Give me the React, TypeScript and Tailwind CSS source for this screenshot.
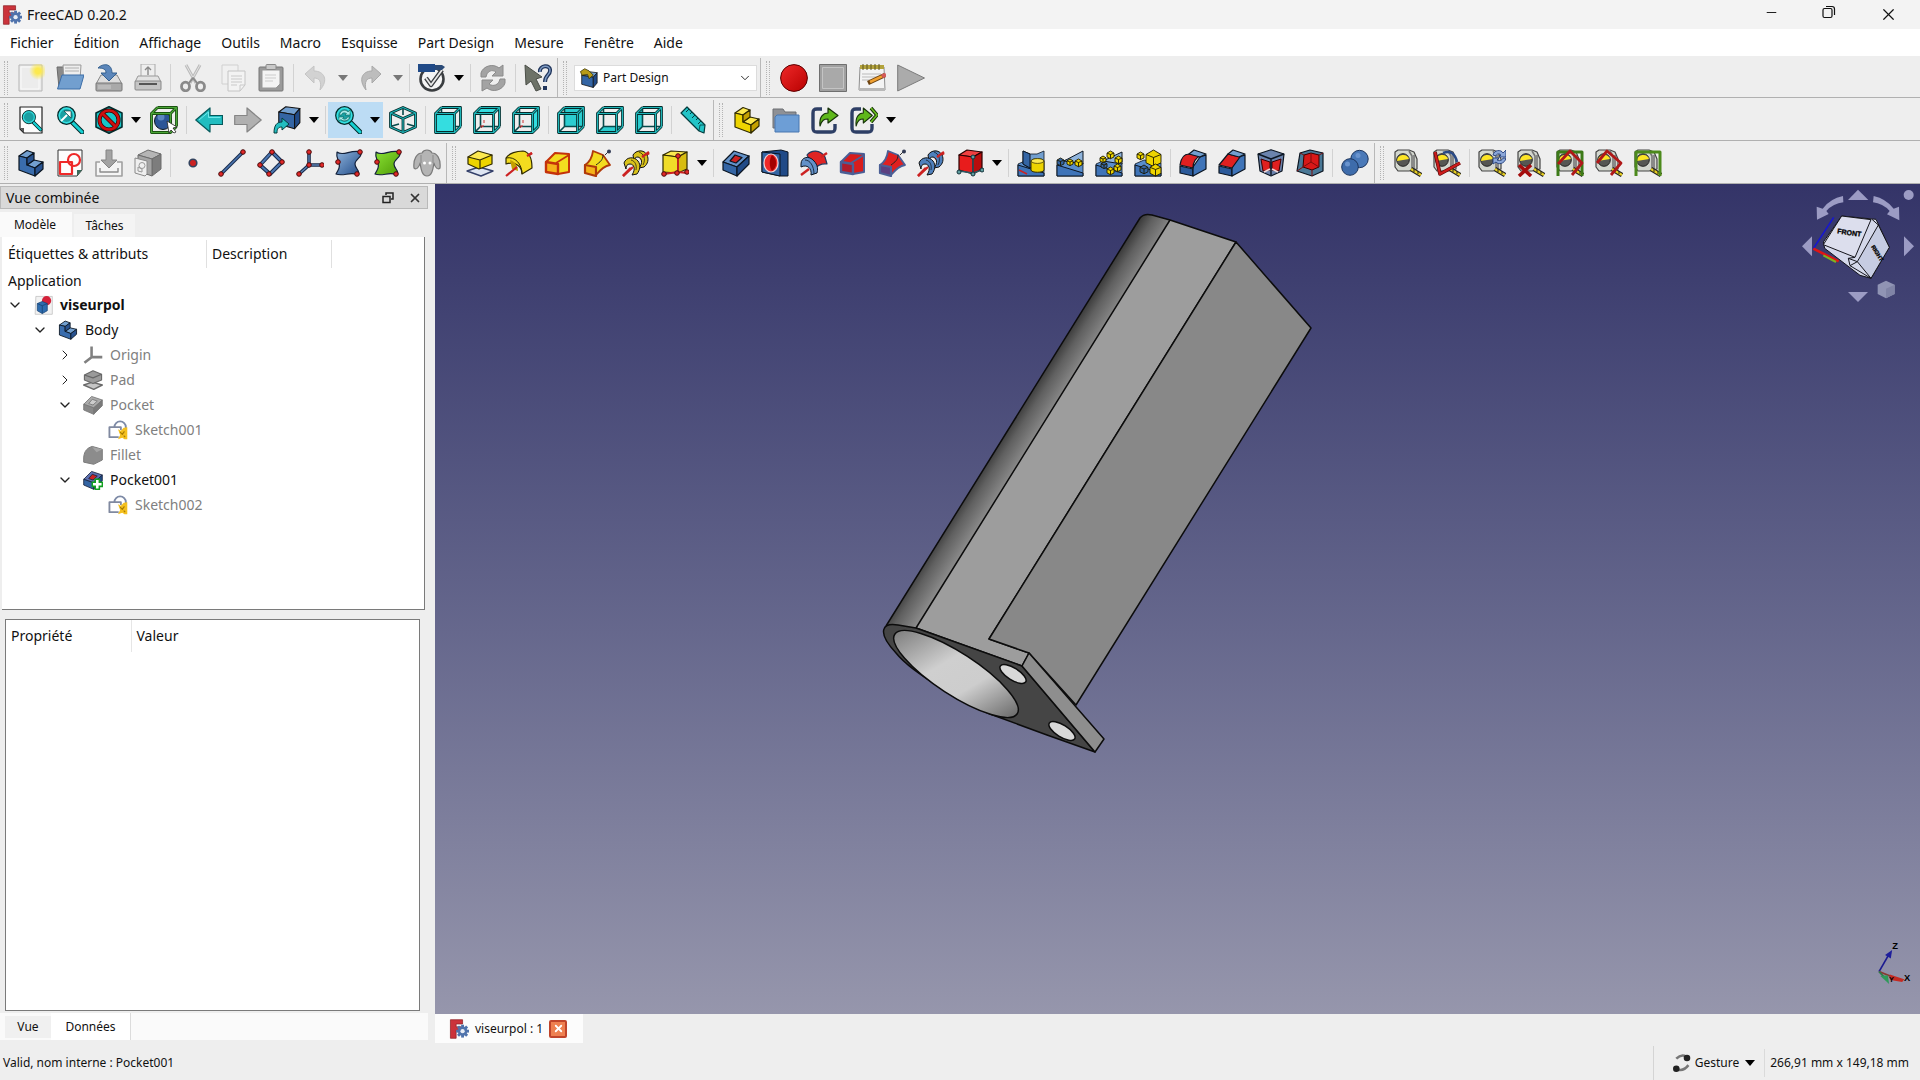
import React, { useState } from 'react';
import { Minus, X, ChevronDown, ChevronRight } from 'lucide-react';

type IconProps = { children: React.ReactNode; className?: string };

const Icon = ({ children, className = 'h-7 w-7' }: IconProps) => (
  <svg viewBox="0 0 28 28" className={`${className} shrink-0`} fill="none" strokeLinejoin="round" aria-hidden="true">
    {children}
  </svg>
);

/* ---------- shared shapes ---------- */

const FreeCadLogo = ({ className }: { className?: string }) => (
  <Icon className={className}>
    <path d="M2 1h17v6H10v4h7v5h-7v11H2z" fill="#cb333b" stroke="#8c1d22" strokeWidth="1" />
    <g transform="translate(19 17)">
      {[0, 45, 90, 135].map((a) => (
        <rect key={a} x="-2" y="-9" width="4" height="18" fill="#4f73ac" transform={`rotate(${a})`} />
      ))}
      <circle r="6.5" fill="#4f73ac" />
      <circle r="3" fill="#e8edf5" />
    </g>
  </Icon>
);

const Box = ({ top, front, side, line = '#111', x = 0, y = 0, s = 1 }: any) => (
  <g transform={`translate(${x} ${y}) scale(${s})`} stroke={line} strokeWidth="1.2">
    <path d="M2 8 10 2 26 4 20 11z" fill={top} />
    <path d="M2 8 20 11V27L2 22z" fill={front} />
    <path d="M20 11 26 4V20L20 27z" fill={side} />
  </g>
);

const Magnifier = ({ x = 0, y = 0, s = 1 }: { x?: number; y?: number; s?: number }) => (
  <g transform={`translate(${x} ${y}) scale(${s})`}>
    <path d="M16 16 26 26" stroke="#042a2a" strokeWidth="5" strokeLinecap="round" />
    <path d="M16 16 26 26" stroke="#16d0d2" strokeWidth="3" strokeLinecap="round" />
    <circle cx="10.5" cy="9.5" r="8.8" fill="#1b9fa2" stroke="#042a2a" strokeWidth="1.2" />
    <circle cx="10.5" cy="9.5" r="7.2" stroke="#34e0e2" strokeWidth="1.4" />
  </g>
);

const cubeEdges = 'M1.5 7.5H20.5V26.5H1.5ZM7.5 1.5H26.5V20.5M1.5 7.5 7.5 1.5M20.5 7.5 26.5 1.5M20.5 26.5 26.5 20.5';
const cubeHidden = 'M7.5 1.5V20.5H26.5M1.5 26.5 7.5 20.5';

const ViewCube = ({ face, back }: { face: string; back?: boolean }) => (
  <Icon>
    {back && <path d={face} fill="#2ccdd0" />}
    <path d={cubeHidden} stroke="#064a4b" strokeWidth="1.600" />
    {!back && <path d="M7 20 11 20M11 14V17M8 22 10 20" stroke="#cc3030" strokeWidth="1" />}
    {!back && <path d={face} fill="#34dde0" />}
    <path d={cubeEdges} stroke="#042a2a" strokeWidth="2.800" />
    <path d={cubeEdges} stroke="#1fb5b8" strokeWidth="1.200" />
  </Icon>
);

const Tape = ({ children }: { children?: React.ReactNode }) => (
  <Icon>
    <path d="M1 3 4 1H15L20 3 23 10V20L15 22H4L1 18z" fill="#d3d7cf" stroke="#444" strokeWidth="1.2" />
    <path d="M15 2 18 7V21M20 6V20" stroke="#777" strokeWidth="1.6" />
    <circle cx="9" cy="11" r="6.3" fill="#555753" stroke="#222" strokeWidth="1" />
    <path d="M3 12A6.2 6.2 0 0 1 15 10z" fill="#fce525" />
    <path d="M17 20 27 26" stroke="#222" strokeWidth="4.5" />
    <path d="M17 20 27 26" stroke="#e8cf20" strokeWidth="2.4" />
    <path d="M20 20v3M24 22v3" stroke="#222" strokeWidth="1" />
    {children}
  </Icon>
);

const Helix = ({ fill, rod }: { fill: string; rod: string }) => (
  <Icon>
    <path d="M1 27 9 19M18 10 27 4" stroke={rod} strokeWidth="2.6" />
    <path d="M11 6C14 1 22 0 25 6C27 10 26 15 22 18L17 19C21 14 20 9 16 8C14 8 12 9 12 12z" fill={fill} stroke="#111" />
    <path d="M2 14C4 8 12 7 16 12C19 16 18 21 15 25L10 26C14 20 12 15 8 15C5 15 4 17 4 20z" fill={fill} stroke="#111" />
    <path d="M9 11C13 12 15 16 14 21M17 3C22 5 24 10 21 16" stroke="#111" strokeWidth=".7" />
    <path d="M1 27 11 18M20 8 27 3" stroke={rod} strokeWidth="2.2" />
  </Icon>
);

const Loft = ({ fill, edge, face }: { fill: string; edge: string; face: string }) => (
  <Icon>
    <path d="M2 13 11 4 25 5V23L14 25z" fill={fill} stroke={edge} strokeWidth="2" />
    <path d="M12 14 25 6" stroke={edge} strokeWidth="1.6" />
    <path d="M2 13 14 15V25L2 23z" fill={face} stroke={edge} strokeWidth="2.4" />
  </Icon>
);

const Pipe = ({ fill, edge, face }: { fill: string; edge: string; face: string }) => (
  <Icon>
    <path d="M2 16C7 13 9 9 10 2L20 6 27 16C22 17 18 20 14 25z" fill={fill} stroke={edge} strokeWidth="1.8" />
    <path d="M13 16C17 13 20 11 20 6" stroke="#222" strokeWidth="1" />
    <path d="M2 16 13 18V27L2 24z" fill={face} stroke={edge} strokeWidth="2.2" />
    <path d="M22 6 25 3" stroke="#333" strokeWidth="1" />
    <circle cx="26" cy="2.5" r="2" fill="#333c55" />
  </Icon>
);

const Sheet = ({ children }: { children: React.ReactNode }) => (
  <Icon>
    <path d="M1 15 10 11 27 14V27H1z" fill="#5a8ecb" stroke="#0b1521" strokeWidth=".8" />
    <path d="M1 16 27 24V27H1z" fill="#3f74b8" stroke="#0b1521" strokeWidth="1" />
    {children}
  </Icon>
);

const TinyCube = ({ x, y, c = '#edd400', s = 6 }: { x: number; y: number; c?: string; s?: number }) => (
  <g stroke="#1c1800" strokeWidth=".9">
    <path d={`M${x} ${y + s * 0.3}L${x + s * 0.5} ${y}L${x + s} ${y + s * 0.3}V${y + s * 0.85}L${x + s * 0.5} ${y + s * 1.1}L${x} ${y + s * 0.85}Z`} fill={c} />
    <path d={`M${x} ${y + s * 0.3}L${x + s * 0.5} ${y + s * 0.5}L${x + s} ${y + s * 0.3}M${x + s * 0.5} ${y + s * 0.5}V${y + s * 1.1}`} />
  </g>
);

const BodyShape = ({ a, b, c, line }: { a: string; b: string; c: string; line: string }) => (
  <g stroke={line} strokeWidth="1.2">
    <path d="M2 7 10 1.500 17 4 10 9zM10 16 17 11 26 13 18 19z" fill={a} />
    <path d="M2 7 10 9V16L18 19V27L2 21z" fill={b} />
    <path d="M10 9 17 4V11L10 16zM18 19 26 13V20L18 27z" fill={c} />
  </g>
);

/* ---------- icons, first row ---------- */

const NewIcon = () => (
  <Icon>
    <defs>
      <radialGradient id="glow"><stop offset=".3" stopColor="#fce94f" /><stop offset="1" stopColor="#fce94f" stopOpacity="0" /></radialGradient>
    </defs>
    <rect x="2" y="1" width="23" height="26" fill="#ececec" stroke="#b5b5b5" />
    <path d="M4 3H22V25H4z" stroke="#fafafa" />
    <circle cx="21" cy="7" r="9" fill="url(#glow)" />
  </Icon>
);
const OpenIcon = () => (
  <Icon>
    <path d="M1 3H9L11 5V24H3z" fill="#8a8a8a" stroke="#6a6a6a" />
    <path d="M7 1H25L24 16H8z" fill="#eee" stroke="#999" />
    <path d="M9 4H23M9 7H23" stroke="#b0b0b0" />
    <path d="M6 11H28L24 25H1.5z" fill="#729fcf" stroke="#3d6ea8" />
  </Icon>
);
const SaveIcon = () => (
  <Icon>
    <path d="M6 11H22L27 20H1z" fill="#ddd" stroke="#888" />
    <rect x="1" y="19" width="26" height="8" rx="1" fill="#a9a9a9" stroke="#777" />
    <path d="M3 22H16M3 24H16" stroke="#ccc" />
    <path d="M3 4C8-1 17-1 17 9H22L14 17 6 9H11C11 5 8 4 3 4z" fill="#5b86ba" stroke="#34608f" />
  </Icon>
);
const PrintIcon = () => (
  <Icon>
    <rect x="7" y="0" width="14" height="15" fill="#eee" stroke="#aaa" />
    <path d="M14 3V11M11 6 14 3 17 6" stroke="#888" strokeWidth="1.4" />
    <path d="M4 12H24L27 18H1z" fill="#e3e3e3" stroke="#999" />
    <rect x="1" y="17" width="26" height="9" rx="1" fill="#c4c4c4" stroke="#888" />
    <path d="M5 20H23" stroke="#555" strokeWidth="2" />
  </Icon>
);
const CutIcon = () => (
  <Icon>
    <path d="M7 1 17 19M21 1 11 19" stroke="#bbb" strokeWidth="3" />
    <path d="M7 1 17 19M21 1 11 19" stroke="#e2e2e2" strokeWidth="1" />
    <ellipse cx="6.5" cy="22.5" rx="4" ry="4.3" stroke="#8a8a8a" strokeWidth="2.8" />
    <ellipse cx="21.5" cy="22.5" rx="4" ry="4.3" stroke="#8a8a8a" strokeWidth="2.8" />
    <path d="M10 19 14 14 18 19" stroke="#8a8a8a" strokeWidth="2" />
  </Icon>
);
const CopyIcon = () => (
  <Icon>
    <rect x="4" y="1" width="16" height="19" fill="#f0f0f0" stroke="#d0d0d0" />
    <path d="M10 7H27V21L22 27H10z" fill="#f3f3f3" stroke="#c4c4c4" />
    <path d="M13 12H24M13 15H24M13 18H24M13 21H19M27 21H22V27" stroke="#c9c9c9" />
  </Icon>
);
const PasteIcon = () => (
  <Icon>
    <rect x="2" y="3" width="24" height="24" rx="1" fill="#9a9a9a" stroke="#777" />
    <path d="M5 6H23V20L19 24H5z" fill="#f4f4f4" stroke="#999" />
    <rect x="9" y="0.5" width="10" height="5" rx="1" fill="#c8c8c8" stroke="#888" />
    <path d="M8 11H19M8 14H19M8 17H16" stroke="#ccc" />
  </Icon>
);
const UndoIcon = () => (
  <Icon>
    <path d="M3 10 12 2V7C22 7 27 16 18 26C20 17 17 14 12 14V19z" fill="#d2d2d2" stroke="#c4c4c4" />
  </Icon>
);
const RedoIcon = () => (
  <Icon>
    <path d="M24 10 15 2V7C5 7 1 16 9 26C7 17 10 14 15 14V19z" fill="#bdbdbd" stroke="#a9a9a9" />
  </Icon>
);
const CheckIcon = () => (
  <Icon>
    <circle cx="14" cy="15" r="11.5" fill="#f5f5f5" stroke="#3a3d40" strokeWidth="2.6" />
    <path d="M8 14 13 21 24 6" stroke="#3a3d40" strokeWidth="4.4" />
    <path d="M8 14 13 21 24 6" stroke="#e8e8e8" strokeWidth="1.8" />
    <rect x="0" y="0" width="17" height="8" fill="#204a87" />
    <path d="M17 1H24L27 3 24 6H17z" fill="#2b4b78" />
  </Icon>
);
const RefreshIcon = () => (
  <Icon>
    <path d="M2 13V9C4 2 14-1 20 4L24 1V12H13L17 8C13 5 8 7 7 13z" fill="#a3a3a3" stroke="#8a8a8a" />
    <path d="M26 15V19C24 26 14 29 8 24L3 27V16H14L10 20C14 23 20 21 21 15z" fill="#a3a3a3" stroke="#8a8a8a" />
  </Icon>
);
const HelpIcon = () => (
  <Icon>
    <path d="M1 1 2 21 7 17 12 27 17 25 12 15 18 13z" fill="#6d7268" stroke="#4a4e47" />
    <path d="M16 8C15 1 27 0 26 7C26 11 21 11 21 18" stroke="#20355c" strokeWidth="4" />
    <path d="M16 8C15 1 27 0 26 7C26 11 21 11 21 18" stroke="#7f9cc4" strokeWidth="1.4" />
    <rect x="19" y="22" width="4" height="4" fill="#20355c" />
  </Icon>
);
const RecordIcon = () => (
  <Icon>
    <defs><linearGradient id="rec" x1="0" y1="0" x2="1" y2="1"><stop stopColor="#ef2929" /><stop offset="1" stopColor="#b80000" /></linearGradient></defs>
    <circle cx="14" cy="14" r="13.4" fill="url(#rec)" stroke="#5c0000" />
  </Icon>
);
const StopIcon = () => (
  <Icon>
    <rect x=".5" y=".5" width="27" height="27" fill="#a0a0a0" stroke="#6f6f6f" />
    <rect x="3.5" y="3.5" width="21" height="21" fill="#a9a9a9" stroke="#c4c4c4" />
  </Icon>
);
const MacroIcon = () => (
  <Icon>
    <path d="M2 3H26L27 26H1z" fill="#f4f4f4" stroke="#8e8e8e" />
    <path d="M2 1H26V5H2z" fill="#b3a33c" />
    <path d="M5 0V6M9 0V6M13 0V6M17 0V6M21 0V6" stroke="#5c5420" />
    <path d="M4 10H23M4 13H23M4 16H12" stroke="#bbb" />
    <path d="M1 24H27V27H1z" fill="#b9b9b9" />
    <path d="M10 19 27 11" stroke="#6d4310" strokeWidth="4.4" />
    <path d="M12 18 24 12.400" stroke="#f0a030" strokeWidth="2.6" />
    <path d="M24 12.400 28 10.500" stroke="#d35a5a" strokeWidth="4" />
  </Icon>
);
const PlayIcon = () => (
  <Icon>
    <path d="M.7 1 27.500 14 .7 27z" fill="#ababab" stroke="#7c7c7c" />
  </Icon>
);

/* ---------- icons, second row ---------- */

const FitAllIcon = () => (
  <Icon>
    <path d="M3 1H25V27H7L3 23z" fill="#fcfcfc" stroke="#222" strokeWidth="1.2" />
    <path d="M3 22H7V27z" fill="#555" />
    <Magnifier x={4} y={4} s={0.75} />
  </Icon>
);
const FitSelectionIcon = () => (
  <Icon>
    <Magnifier />
    <path d="M5 15 11 9" stroke="#fff" strokeWidth="2" />
    <path d="M8 5H15V12z" fill="#fff" stroke="#042a2a" strokeWidth=".6" />
  </Icon>
);
const DrawStyleIcon = () => (
  <Icon>
    <path d="M14 .8 27 7V21L14 27.200 1 21V7z" fill="#16c5c8" stroke="#032d2e" strokeWidth="1.6" />
    <circle cx="14" cy="14" r="9.500" stroke="#320000" strokeWidth="4" />
    <path d="M7 7 21 21" stroke="#320000" strokeWidth="4.200" />
    <circle cx="14" cy="14" r="9.500" stroke="#cc1010" strokeWidth="2.600" />
    <path d="M7 7 21 21" stroke="#cc1010" strokeWidth="2.800" />
  </Icon>
);
const BoundBoxIcon = () => (
  <Icon>
    <circle cx="13" cy="15" r="8.500" fill="#2c5597" stroke="#0b1521" />
    <circle cx="11" cy="11" r="3.500" fill="#5c86c0" />
    <path d={cubeEdges} stroke="#0c3a06" strokeWidth="2.800" />
    <path d={cubeEdges} stroke="#4aa536" strokeWidth="1.400" />
    <path d="M17 15 27 21 23 22 26 26 24 27 21 24 19 27z" fill="#fff" stroke="#222" strokeWidth=".8" />
  </Icon>
);
const BackIcon = () => (
  <Icon>
    <path d="M.8 14 15 2V9.500H27.500V18.500H15V26z" fill="#22bdc0" stroke="#05595b" strokeWidth="1.200" />
    <path d="M4 14 13.500 6V11.500H25.500" stroke="#6fe8ea" />
  </Icon>
);
const ForwardIcon = () => (
  <Icon>
    <path d="M27.200 14 13 2V9.500H.7V18.500H13V26z" fill="#b0b0b0" stroke="#858585" strokeWidth="1.200" />
  </Icon>
);
const LinkNavIcon = () => (
  <Icon>
    <Box top="#729fcf" front="#3465a4" side="#204a87" x={4} y={-1} s={0.88} />
    <path d="M1 27C1 19 4 16 9 16V12L16 18 9 24V21C5 21 4 23 4 27z" fill="#22bdc0" stroke="#043c3d" />
  </Icon>
);
const SyncViewIcon = () => (
  <Icon>
    <Magnifier />
    <path d="M5.500 9C6 4 12 3 14 6L16 4V9H11L12.500 7.500C10 6 8 7 7.500 9zM15.500 11C15 15 9 16 7 13.500L5 15V11H10L8.500 12.500C11 14 13 13 13.500 11z" fill="#a9eaeb" stroke="#054" strokeWidth=".5" />
  </Icon>
);
const IsoIcon = () => (
  <Icon>
    <path d="M14 2V9M3 20 10 18M25 20 18 18" stroke="#064a4b" strokeWidth="1.600" />
    <path d="M14 1.500 26.500 7V21L14 26.500 1.500 21V7zM1.500 7 14 12.500 26.500 7M14 12.500V26.500" stroke="#042a2a" strokeWidth="2.800" />
    <path d="M14 1.500 26.500 7V21L14 26.500 1.500 21V7zM1.500 7 14 12.500 26.500 7M14 12.500V26.500" stroke="#1fb5b8" strokeWidth="1.200" />
  </Icon>
);
const RulerIcon = () => (
  <Icon>
    <path d="M1 7 7 1 25 19 24 27 19 25z" fill="#22c4c7" stroke="#043c3d" strokeWidth="1.200" />
    <path d="M19 25 20 19 25 19" stroke="#043c3d" strokeWidth=".8" />
    <path d="M9 3 6 6M12 6 10 8M15 9 12 12M18 12 16 14M21 15 18 18" stroke="#043c3d" />
  </Icon>
);
const PartIcon = () => (
  <Icon>
    <BodyShape a="#fce94f" b="#edd400" c="#c4a000" line="#302b00" />
  </Icon>
);
const GroupIcon = () => (
  <Icon>
    <path d="M1 3H11L13 6H24V22H1z" fill="#8e9095" stroke="#6c6e72" />
    <path d="M5 9H27V26H3V11z" fill="#6d9ed6" stroke="#4877b0" />
  </Icon>
);
const GreenArrow = () => (
  <path d="M9 20C8 11 12 7 17 7V2L27 9.500 17 17V13C13 13 11 14 9 20z" fill="#5fb81b" stroke="#17330a" strokeWidth="1.200" />
);
const LinkIcon = () => (
  <Icon>
    <path d="M11 3H6C3 3 2 4 2 7V22C2 25 3 26 6 26H20C23 26 24 25 24 22V18" stroke="#2e3f66" strokeWidth="3.400" />
    <GreenArrow />
  </Icon>
);
const LinkGroupIcon = () => (
  <Icon>
    <path d="M11 3H6C3 3 2 4 2 7V22C2 25 3 26 6 26H18C21 26 22 25 22 22V18" stroke="#2e3f66" strokeWidth="3.400" />
    <g transform="translate(-2 0) scale(.9 1)"><GreenArrow /></g>
    <path d="M21 2 27 9 21 16" stroke="#17330a" strokeWidth="3.600" />
    <path d="M21 2 27 9 21 16" stroke="#6cc11f" strokeWidth="1.600" />
  </Icon>
);

/* ---------- icons, third row ---------- */

const BodyIcon = ({ className }: { className?: string }) => (
  <Icon className={className}>
    <BodyShape a="#729fcf" b="#3a6dad" c="#28528f" line="#0b1521" />
  </Icon>
);
const SketchIcon = () => (
  <Icon>
    <path d="M2 1H26V21L21 27H2z" fill="#fdfdfd" stroke="#333" />
    <path d="M26 21H21V27z" fill="#3a6b5b" />
    <rect x="4" y="13" width="12" height="12" stroke="#ef2929" strokeWidth="2.200" />
    <circle cx="18" cy="11" r="6" stroke="#ef2929" strokeWidth="2.200" />
  </Icon>
);
const ImportIcon = () => (
  <Icon>
    <path d="M5 13H1V27H27V13H22" fill="#f5f5f5" stroke="#a0a0a0" strokeWidth="1.600" />
    <path d="M5 19V23H23V19" stroke="#8c8c8c" strokeWidth="1.400" />
    <path d="M11 1H17V11H22L14 19 6 11H11z" fill="#a3a3a3" stroke="#848484" />
  </Icon>
);
const GrayCubeIcon = () => (
  <Icon>
    <path d="M4 6 14 1 27 5 18 10z" fill="#b5b5b5" stroke="#6c6c6c" />
    <path d="M18 10 27 5V20L18 27z" fill="#7d7d7d" stroke="#6c6c6c" />
    <path d="M4 6 18 10V27L4 22z" fill="#a5a5a5" stroke="#6c6c6c" />
    <path d="M1 9 13 12V25L11 27 1 24z" fill="#efefef" stroke="#8a8a8a" />
    <path d="M4 18 8 20V23L4 22z" stroke="#999" />
    <circle cx="8" cy="16.500" r="3" stroke="#999" />
  </Icon>
);
const PointIcon = () => (
  <Icon>
    <circle cx="14" cy="14" r="3.800" fill="#cc2222" stroke="#33435e" strokeWidth="1.600" />
  </Icon>
);
const Dot = ({ x, y }: { x: number; y: number }) => (
  <circle cx={x} cy={y} r="2.300" fill="#e22828" stroke="#4a0b0b" strokeWidth="1" />
);
const LineIcon = () => (
  <Icon>
    <path d="M3 25 25 3" stroke="#16294a" strokeWidth="3.600" />
    <path d="M3 25 25 3" stroke="#4a75b0" strokeWidth="1.600" />
    <Dot x={3} y={25} /><Dot x={25} y={3} />
  </Icon>
);
const PlaneIcon = () => (
  <Icon>
    <path d="M15 3 25 13 13 25 3 16z" stroke="#16294a" strokeWidth="4" />
    <path d="M15 3 25 13 13 25 3 16z" stroke="#4a75b0" strokeWidth="2" />
    <Dot x={15} y={3} /><Dot x={25} y={13} /><Dot x={12} y={25} /><Dot x={3} y={16} />
  </Icon>
);
const LcsIcon = () => (
  <Icon>
    <path d="M13 3V16L3 25M13 16H25" stroke="#16294a" strokeWidth="3.600" />
    <path d="M13 3V16L3 25M13 16H25" stroke="#5a7fb0" strokeWidth="1.400" />
    <Dot x={13} y={3} /><Dot x={13} y={16} /><Dot x={3} y={25} /><Dot x={26} y={16} />
  </Icon>
);
const BinderIcon = ({ from, to, id }: { from: string; to: string; id: string }) => (
  <Icon>
    <defs><linearGradient id={id} x1="0" y1="0" x2="1" y2="1"><stop stopColor={from} /><stop offset="1" stopColor={to} /></linearGradient></defs>
    <path d="M2 3C8 8 16 0 26 3C28 8 20 10 20 15C20 20 26 22 23 26C16 22 8 28 1 25C4 20 5 18 4 14C3 10 1 8 2 3z" fill={`url(#${id})`} stroke="#12203a" strokeWidth="1.200" />
    <Dot x={25} y={3} /><Dot x={3} y={13} /><Dot x={22} y={25} />
  </Icon>
);
const CloneIcon = () => (
  <Icon>
    <path d="M9 4C11 0 17 0 19 4C24 4 28 10 27 19C25 21 22 19 21 14C20 20 19 27 14 27C9 27 8 20 7 14C6 19 3 21 1 19C0 10 4 4 9 4z" fill="#b4b4b4" stroke="#7a7a7a" strokeWidth="1.200" />
    <path d="M8 6V14M20 6V14" stroke="#8a8a8a" />
    <circle cx="11.500" cy="14" r="1.500" fill="#fff" /><circle cx="17" cy="14" r="1.500" fill="#fff" />
  </Icon>
);
const PadIcon = () => (
  <Icon>
    <path d="M1 22 13 18 27 22 15 27z" fill="#dfe6f2" stroke="#34406a" strokeWidth="1.400" />
    <path d="M2 8V15L13 20 26 15V6z" fill="#edd400" stroke="#302b00" strokeWidth="1.200" />
    <path d="M2 8 12 2 26 6 14 11zM14 11V20" fill="#fce94f" stroke="#302b00" strokeWidth="1.200" />
  </Icon>
);
const RevolutionIcon = () => (
  <Icon>
    <path d="M19 9 27 4" stroke="#cc2222" strokeWidth="2.400" />
    <path d="M1 9C4 4 12 2 18 2C24 3 27 9 27 19L17 25C17 18 11 12 1 15z" fill="#f3dc1f" stroke="#302b00" strokeWidth="1.200" />
    <path d="M1 9C10 7 17 15 17 25" stroke="#302b00" />
    <path d="M5 11C9 12 13 16 13 22L7 20z" fill="#c4a000" />
    <path d="M1 27 12 18M22 7 27 4" stroke="#cc2222" strokeWidth="2.200" />
  </Icon>
);
const PrimAddIcon = () => (
  <Icon>
    <path d="M2 6 10 2 26 3 17 8z" fill="#fce94f" stroke="#302b00" strokeWidth="1.200" />
    <path d="M2 6 17 8V24L2 23z" fill="#f0dc28" stroke="#302b00" strokeWidth="1.200" />
    <path d="M17 8 26 3V20L17 24z" fill="#d8bc10" stroke="#302b00" strokeWidth="1.200" />
    <path d="M17 7V23L3 25M17 23 26 24" stroke="#cc2222" strokeWidth="1.800" />
    <Dot x={17} y={7} /><Dot x={3} y={25} /><Dot x={16} y={24} /><Dot x={26} y={23} />
  </Icon>
);
const PocketShape = ({ top, front, side, hole, line }: any) => (
  <g stroke={line} strokeWidth="1.200">
    <path d="M1 13 12 2 27 7 15 18z" fill={top} />
    <path d="M1 13 15 18V27L1 21z" fill={front} />
    <path d="M15 18 27 7V15L15 27z" fill={side} />
    <path d="M8 12 13 6 20 8.500 14 14z" fill={hole} />
  </g>
);
const PocketIcon = () => (
  <Icon><PocketShape top="#6391c8" front="#3465a4" side="#204a87" hole="#cc2222" line="#0b1521" /></Icon>
);
const HoleIcon = () => (
  <Icon>
    <path d="M1 3 20 1 27 3V27H19L1 23z" fill="#204a87" stroke="#0b1521" />
    <path d="M1 3 19 5V27L1 23z" fill="#3465a4" stroke="#0b1521" />
    <ellipse cx="10" cy="14" rx="7" ry="9" fill="#ef2929" stroke="#f3d0d0" strokeWidth="1.200" />
    <path d="M11 6C17 10 16 19 11 22C8 18 8 10 11 6z" fill="#a40000" />
  </Icon>
);
const GrooveIcon = () => (
  <Icon>
    <path d="M7 6C11 1 20 0 25 8L27 15C21 14 17 17 14 20z" fill="#df2424" stroke="#24385e" strokeWidth="1.200" />
    <path d="M1 15C1 8 9 6 14 12C18 16 18 21 17 24L11 26C12 19 7 15 1 18z" fill="#6391c8" stroke="#0b1521" />
    <path d="M5 11C10 11 14 17 14 25" stroke="#0b1521" strokeWidth=".8" />
    <path d="M1 26 9 20M21 8 27 4" stroke="#cc2222" strokeWidth="2.400" />
  </Icon>
);
const PrimSubIcon = () => (
  <Icon>
    <path d="M3 6 11 1 26 3 17 8z" fill="#f04040" stroke="#2b0000" strokeWidth="1.200" />
    <path d="M3 6 17 8V25L3 21z" fill="#e81c1c" stroke="#2b0000" strokeWidth="1.200" />
    <path d="M17 8 26 3V20L17 25z" fill="#b80d0d" stroke="#2b0000" strokeWidth="1.200" />
    <path d="M17 7V24L3 22M17 24 26 21" stroke="#2c5b66" strokeWidth="1.400" />
    {[[17, 8], [3, 23], [17, 25], [26, 21]].map(([x, y]) => (
      <circle key={`${x}-${y}`} cx={x} cy={y} r="2" fill="#5f9ea0" stroke="#14323a" />
    ))}
  </Icon>
);
const MirroredIcon = () => (
  <Sheet>
    <path d="M6 2 13 5 20 5 27 2V14L12 19 6 15z" fill="#729fcf" stroke="#0b1521" strokeWidth=".8" />
    <path d="M6 2 13 5V19L6 15z" fill="#3465a4" stroke="#0b1521" />
    <path d="M14 12C14 9 27 9 27 12V21C27 24 14 24 14 21z" fill="#edd400" stroke="#302b00" />
    <ellipse cx="20.500" cy="12" rx="6.300" ry="2.400" fill="#fce94f" stroke="#302b00" strokeWidth=".7" />
    <path d="M2 21 10 25" stroke="#cc2222" strokeWidth="1.500" />
  </Sheet>
);
const LinearIcon = () => (
  <Sheet>
    <path d="M8 12 27 2V15z" fill="#8fb4dc" stroke="#0b1521" />
    <TinyCube x={1} y={9} c="#3465a4" s={7} /><TinyCube x={11} y={10} /><TinyCube x={19} y={10} s={7} />
  </Sheet>
);
const PolarIcon = () => (
  <Sheet>
    <path d="M8 12 27 3V15z" fill="#8fb4dc" stroke="#0b1521" />
    <TinyCube x={12} y={2} s={7} /><TinyCube x={5} y={7} s={6} /><TinyCube x={20} y={7} s={7} /><TinyCube x={6} y={13} c="#3465a4" /><TinyCube x={12} y={18} s={7} /><TinyCube x={19} y={15} s={7} />
  </Sheet>
);
const MultiIcon = () => (
  <Sheet>
    <TinyCube x={12} y={1} s={15} /><TinyCube x={3} y={3} s={7} /><TinyCube x={6} y={16} c="#3465a4" s={8} /><TinyCube x={16} y={15} s={11} />
  </Sheet>
);
const FilletShape = ({ flat, top, side, front, round }: any) => (
  <g stroke="#0b1521" strokeWidth="1.200">
    <path d="M1 17 1 24 14 27V20z" fill={front} />
    <path d="M14 27V18L21 8 27 6V20z" fill={side} />
    <path d={flat ? 'M1 16 10 5 22 8 14 19z' : 'M1 16C2 9 5 5 10 5L22 7C17 8 14 13 14 19z'} fill={round} />
    <path d="M10 5 15 1 27 5 21 8z" fill={top} />
  </g>
);
const FilletIcon = ({ flat }: { flat?: boolean }) => (
  <Icon><FilletShape flat={flat} top="#729fcf" side="#3f74b8" front="#2b5a9a" round="#e02020" /></Icon>
);
const DraftIcon = () => (
  <Icon>
    <path d="M14 .8 27 5 25 22 14 27 3 22 1 5z" fill="#6b83ad" stroke="#0b1521" strokeWidth="1.200" />
    <path d="M4 10 13 13V21L6 22zM24 10 15 13V21L22 22z" fill="#e02020" stroke="#3c0000" />
    <path d="M1 5 14 10 27 5M14 10V26" stroke="#0b1521" strokeWidth="1.400" />
    <path d="M7 23 13 20M21 23 15 20" stroke="#f3d7d7" strokeWidth="1.600" />
  </Icon>
);
const ThicknessIcon = () => (
  <Icon>
    <path d="M4 4 14 1 27 4V22L16 27 1 22z" fill="#4a7896" stroke="#0b1521" strokeWidth="1.200" />
    <path d="M8 6 15 4 23 6V18L16 21 7 18z" fill="#d81818" stroke="#3c0000" />
    <path d="M4 4 8 6M27 4 23 6M1 22 7 18M16 27V21M15 4V13L7 18M15 13 23 18" stroke="#7a0c0c" />
  </Icon>
);
const BooleanIcon = () => (
  <Icon>
    <circle cx="18.500" cy="10" r="8.700" fill="#4a79b8" stroke="#1c355e" />
    <circle cx="9" cy="18" r="8.300" fill="#3e6cab" stroke="#1c355e" />
    <circle cx="6.500" cy="15" r="2.500" fill="#6a94ce" />
    <circle cx="17" cy="6.500" r="2.500" fill="#6a94ce" />
  </Icon>
);

/* ---------- toolbar pieces ---------- */

const Tool = ({ label, children }: { label: string; children: React.ReactNode }) => (
  <button type="button" aria-label={label} title={label} className="flex h-9 w-[39px] shrink-0 items-center justify-center">
    {children}
  </button>
);

const Drop = ({ label, muted }: { label: string; muted?: boolean }) => (
  <button type="button" aria-label={label} className="flex h-9 w-4 shrink-0 items-center justify-center">
    <svg viewBox="0 0 10 6" className="h-[6px] w-[10px]" aria-hidden="true">
      <path d="M0 0H10L5 6z" fill={muted ? '#777' : '#000'} />
    </svg>
  </button>
);

const Sep = () => (
  <div className="flex w-[6px] shrink-0 justify-center">
    <span className="h-7 w-px bg-[#d2d2d2]" />
  </div>
);

const Grip = () => <span className="h-[34px] w-1 border-x border-dotted border-[#b4b4b4]" />;

const Join = () => (
  <div className="flex w-[14px] shrink-0 items-center justify-between self-stretch pr-1">
    <span className="w-px self-stretch bg-[#b8b8b8]" />
    <Grip />
  </div>
);

const Bar = ({ children, className = 'h-[43px]' }: { children: React.ReactNode; className?: string }) => (
  <div role="toolbar" className={`flex items-center overflow-hidden border-b border-[#b0b0b0] bg-[#eeeeee] pt-[2px] ${className}`}>
    <div className="flex w-[11px] shrink-0 pl-1"><Grip /></div>
    {children}
  </div>
);

/* ---------- model tree ---------- */

const GrayOrigin = () => (
  <Icon className="h-5 w-5">
    <path d="M12 2V17L2 25M12 17H27" stroke="#808080" strokeWidth="3.600" />
  </Icon>
);
const GrayPad = () => (
  <Icon className="h-5 w-5">
    <path d="M1 21 13 17 27 21 15 27z" fill="#c5c5c5" stroke="#6a6a6a" strokeWidth="2" />
    <path d="M2 7V14L14 19 26 14V6L14 1z" fill="#9a9a9a" stroke="#6a6a6a" strokeWidth="1.600" />
    <path d="M2 7 14 11 26 6" stroke="#666" strokeWidth="1.600" />
  </Icon>
);
const GrayPocket = () => (
  <Icon className="h-5 w-5"><PocketShape top="#aaa" front="#888" side="#7a7a7a" hole="#ccc" line="#777" /></Icon>
);
const GrayFillet = () => (
  <Icon className="h-5 w-5">
    <path d="M1 17C2 8 6 4 13 2L27 6V21L15 27 1 24z" fill="#8c8c8c" stroke="#7c7c7c" strokeWidth="1.400" />
    <path d="M13 3 27 6 19 10z" fill="#a5a5a5" />
  </Icon>
);
const TreeSketch = () => (
  <Icon className="h-5 w-5">
    <path d="M9 10A8 8 0 0 1 25 10V14" stroke="#7d8aa6" strokeWidth="2.600" />
    <path d="M15 24H2V10H18V14" stroke="#8089a0" strokeWidth="2.600" />
    <path d="M14 13 18 15 22 11 27 10V27H23L20 25 14 27 17 21z" fill="#f4c01e" />
    <path d="M17 17 20 20 23 16M22 22 24 24" stroke="#a67a00" strokeWidth="1.600" />
  </Icon>
);
const TreePocketTip = () => (
  <Icon className="h-5 w-5">
    <PocketShape top="#5d6fb0" front="#3465a4" side="#204a87" hole="#cc2222" line="#1b2540" />
    <path d="M20 12V28M12 20H28" stroke="#12a020" strokeWidth="8" />
    <path d="M20 14V26M14 20H26" stroke="#fff" strokeWidth="3.600" />
  </Icon>
);
const DocIcon = () => (
  <Icon className="h-5 w-5">
    <path d="M4 2H27V27H3z" fill="#f2f2f2" stroke="#bcbcbc" />
    <circle cx="19" cy="8" r="6.500" fill="#d4213a" />
    <path d="M6 12 13 9 20 12V22L13 26 6 22z" fill="#2e6cae" stroke="#15406f" />
    <path d="M6 12 13 15 20 12M13 15V26" stroke="#15406f" />
  </Icon>
);

type Node = { label: string; indent: string; icon: React.ReactNode; open?: boolean; leaf?: boolean; style?: string };

const nodes: Node[] = [
  { label: 'viseurpol', indent: 'pl-[5px]', icon: <DocIcon />, open: true, style: 'font-bold' },
  { label: 'Body', indent: 'pl-[30px]', icon: <BodyIcon className="h-5 w-5" />, open: true },
  { label: 'Origin', indent: 'pl-[55px]', icon: <GrayOrigin />, style: 'text-[#808080]' },
  { label: 'Pad', indent: 'pl-[55px]', icon: <GrayPad />, style: 'text-[#808080]' },
  { label: 'Pocket', indent: 'pl-[55px]', icon: <GrayPocket />, open: true, style: 'text-[#808080]' },
  { label: 'Sketch001', indent: 'pl-[80px]', icon: <TreeSketch />, leaf: true, style: 'text-[#808080]' },
  { label: 'Fillet', indent: 'pl-[55px]', icon: <GrayFillet />, leaf: true, style: 'text-[#808080]' },
  { label: 'Pocket001', indent: 'pl-[55px]', icon: <TreePocketTip />, open: true },
  { label: 'Sketch002', indent: 'pl-[80px]', icon: <TreeSketch />, leaf: true, style: 'text-[#808080]' },
];

const menus = ['Fichier', 'Édition', 'Affichage', 'Outils', 'Macro', 'Esquisse', 'Part Design', 'Mesure', 'Fenêtre', 'Aide'];

/* ---------- 3D view ---------- */

const Model = () => (
  <svg viewBox="875 205 445 555" className="absolute left-[440px] top-[21px] w-[445px]" fill="none" stroke="#0c0c0c" strokeWidth="1.500" strokeLinejoin="round" aria-label="viseurpol">
    <defs>
      <linearGradient id="cyl" gradientUnits="userSpaceOnUse" x1="1010" y1="418" x2="1043" y2="439">
        <stop stopColor="#303030" />
        <stop offset=".35" stopColor="#606060" />
        <stop offset="1" stopColor="#9a9a9a" />
      </linearGradient>
      <linearGradient id="bore" gradientUnits="userSpaceOnUse" x1="895" y1="640" x2="1017" y2="700">
        <stop stopColor="#7c7c7c" />
        <stop offset=".4" stopColor="#cfcfcf" />
        <stop offset=".65" stopColor="#cdcdcd" />
        <stop offset="1" stopColor="#6e6e6e" />
      </linearGradient>
    </defs>
    <path d="M886 626 1140 218Q1144 213 1152 215L1170 220 916 628z" fill="url(#cyl)" stroke="none" />
    <path d="M1170 220 1236 242 989 639 1029 653 1022 666 916 628z" fill="#9d9d9d" />
    <path d="M1236 242 1311 328 1076 705 1029 653 989 639z" fill="#888888" />
    <path d="M886 626 1140 218Q1144 213 1152 215L1170 220" />
    <path d="M884 629Q886 623 898 625L916 628 1022 666 1095 752 1047 735 990 714Q960 702 942 688 908 668 896 653 881 637 884 629z" fill="#454545" />
    <path d="M1022 666 1029 653 1104 739 1095 752z" fill="#8e8e8e" />
    <ellipse cx="956" cy="674" rx="73" ry="21" transform="rotate(33 956 674)" fill="url(#bore)" />
    <ellipse cx="1013" cy="674" rx="15" ry="6" transform="rotate(32 1013 674)" fill="#d8d8d8" />
    <ellipse cx="1062" cy="731" rx="15" ry="6" transform="rotate(32 1062 731)" fill="#d8d8d8" />
  </svg>
);

const NavCube = () => (
  <svg viewBox="0 42 480 378" className="absolute right-0 top-0 w-40" strokeLinejoin="round" aria-label="Navigation">
    <g fill="#9c9cc4">
      <path d="M264 90 294 59 325 90z" />
      <path d="M264 366H324L294 396z" />
      <path d="M126 229 156 199V259z" />
      <path d="M462 229 432 199V259z" />
      <path d="M249 78Q210 86 188 116L170 110 171 149 206 132 199 123Q220 100 250 97z" />
      <path d="M341 78Q378 86 401 116L417 110 418 151 381 133 389 123Q368 100 339 97z" />
      <circle cx="446" cy="75" r="15" />
    </g>
    <path d="M353 344 378 332 404 344V372L378 385 353 372z" fill="#9094b4" />
    <path d="M378 356 404 344V372L378 385z" fill="#8084a6" />
    <g stroke="#15151c" strokeWidth="3">
      <path d="M245 138 348 148 388 232 333 325 300 316 194 235 190 216z" fill="#d4d8ea" />
      <path d="M245 138 333 149 285 262 190 224z" fill="#dcdeed" />
      <path d="M355 165 388 232 333 325 292 275z" fill="#c6cce2" />
      <path d="M355 165 336 148M285 262 265 265 270 287 333 325M265 265 292 275 270 287" fill="none" />
    </g>
    <path d="M160 236 221 142" stroke="#1717d0" strokeWidth="5" />
    <path d="M160 236 236 274" stroke="#e01515" strokeWidth="8" />
    <path d="M190 256 228 276" stroke="#7fb321" strokeWidth="6" />
    <text x="231" y="190" transform="rotate(8 231 190)" fontSize="21" fontWeight="bold" fontFamily="Liberation Sans, sans-serif" fill="#000" stroke="#000">FRONT</text>
    <text x="333" y="230" transform="rotate(58 333 230)" fontSize="17" fontWeight="bold" fontFamily="Liberation Sans, sans-serif" fill="#000" stroke="#000">RIGHT</text>
  </svg>
);

const AxisCross = () => (
  <svg viewBox="700 60 140 140" className="absolute bottom-7 right-0 w-[47px]" fontFamily="Liberation Sans, sans-serif" fontWeight="bold" fontSize="28" aria-label="Axes">
    <path d="M718 157 748 105" stroke="#1b1b90" strokeWidth="5" />
    <path d="M757 93 753 118 736 108z" fill="#1e1e9c" />
    <path d="M718 157 755 172" stroke="#8a3a30" strokeWidth="5" />
    <path d="M750 166 793 180 787 188 752 182z" fill="#c42a22" />
    <path d="M718 157 732 172" stroke="#2f7a4a" strokeWidth="5" />
    <path d="M722 170 744 168 748 194z" fill="#2f9a5a" />
    <text x="757" y="90" fill="#000">Z</text>
    <text x="792" y="184" fill="#000">X</text>
    <text x="748" y="188" fontSize="22" fill="#000">Y</text>
  </svg>
);

/* ---------- page ---------- */

export default function App() {
  const [workbench, setWorkbench] = useState('Part Design');

  return (
    <div className="flex h-screen flex-col overflow-hidden bg-[#eeeeee] font-['Noto_Sans','Open_Sans',sans-serif] text-[14px] leading-5 text-[#111]">
      <header className="flex h-[29px] shrink-0 items-center bg-[#f3f3f3] pl-[2px]">
        <FreeCadLogo className="h-5 w-5" />
        <h1 className="flex-1 pl-[5px] text-[14px]">FreeCAD 0.20.2</h1>
        <div className="flex pr-[2px]">
          <button type="button" aria-label="Réduire" className="flex w-[58px] justify-center"><Minus size={15} strokeWidth={1.5} /></button>
          <button type="button" aria-label="Restaurer" className="flex w-[58px] justify-center">
            <svg viewBox="0 0 14 14" className="h-[14px] w-[14px]" fill="none" stroke="#111" strokeWidth="1.200">
              <rect x="1" y="3.500" width="9" height="9" rx="1.500" />
              <path d="M4 1.500H10Q12.500 1.500 12.500 4V10" />
            </svg>
          </button>
          <button type="button" aria-label="Fermer" className="flex w-[60px] justify-center"><X size={19} strokeWidth={1.500} /></button>
        </div>
      </header>

      <nav className="flex h-[27px] shrink-0 items-center bg-white">
        {menus.map((m) => (
          <button key={m} type="button" className="px-[10px]">{m}</button>
        ))}
      </nav>

      <div className="shrink-0">
        <Bar className="h-[42px]">
          <Tool label="Nouveau"><NewIcon /></Tool>
          <Tool label="Ouvrir"><OpenIcon /></Tool>
          <Tool label="Enregistrer"><SaveIcon /></Tool>
          <Tool label="Imprimer"><PrintIcon /></Tool>
          <Sep />
          <Tool label="Couper"><CutIcon /></Tool>
          <Tool label="Copier"><CopyIcon /></Tool>
          <Tool label="Coller"><PasteIcon /></Tool>
          <Sep />
          <Tool label="Annuler"><UndoIcon /></Tool>
          <Drop label="Historique d'annulation" muted />
          <Tool label="Rétablir"><RedoIcon /></Tool>
          <Drop label="Historique de rétablissement" muted />
          <Sep />
          <Tool label="Valider l'esquisse"><CheckIcon /></Tool>
          <Drop label="Options de validation" />
          <Sep />
          <Tool label="Rafraîchir"><RefreshIcon /></Tool>
          <Sep />
          <Tool label="Qu'est-ce que c'est ?"><HelpIcon /></Tool>
          <Join />
          <div className="relative mx-[3px] flex shrink-0 items-center">
            <span className="pointer-events-none absolute left-[5px]">
              <Icon className="h-5 w-5">
                <Box top="#729fcf" front="#3465a4" side="#204a87" x={2} y={3} s={0.9} />
                <path d="M2 5 8 1 14 4 20 10 14 15 12 9 4 10z" fill="#b89b17" stroke="#302b00" />
              </Icon>
            </span>
            <select
              aria-label="Atelier"
              value={workbench}
              onChange={(e) => setWorkbench(e.target.value)}
              className="h-[26px] w-[183px] appearance-none border border-[#dcdcdc] bg-white pl-[28px] text-[12px] outline-none"
            >
              <option>Part Design</option>
              <option>Part</option>
              <option>Sketcher</option>
              <option>Draft</option>
            </select>
            <ChevronDown size={14} strokeWidth={1.500} className="pointer-events-none absolute right-[5px]" />
          </div>
          <Join />
          <Tool label="Enregistrer une macro"><RecordIcon /></Tool>
          <Tool label="Arrêter l'enregistrement"><StopIcon /></Tool>
          <Tool label="Macros"><MacroIcon /></Tool>
          <Tool label="Exécuter la macro"><PlayIcon /></Tool>
        </Bar>

        <Bar>
          <Tool label="Tout afficher"><FitAllIcon /></Tool>
          <Tool label="Afficher la sélection"><FitSelectionIcon /></Tool>
          <Tool label="Style de représentation"><DrawStyleIcon /></Tool>
          <Drop label="Styles de représentation" />
          <Tool label="Boîte englobante"><BoundBoxIcon /></Tool>
          <Sep />
          <Tool label="Sélection précédente"><BackIcon /></Tool>
          <Tool label="Sélection suivante"><ForwardIcon /></Tool>
          <Tool label="Aller à l'objet lié"><LinkNavIcon /></Tool>
          <Drop label="Navigation des liens" />
          <Sep />
          <div className="flex bg-[#bcdcf4]">
            <Tool label="Synchroniser la vue"><SyncViewIcon /></Tool>
            <Drop label="Options de synchronisation" />
          </div>
          <Tool label="Isométrique"><IsoIcon /></Tool>
          <Sep />
          <Tool label="Face"><ViewCube face="M1.500 7.500H20.500V26.500H1.500z" /></Tool>
          <Tool label="Dessus"><ViewCube face="M1.500 7.500 7.500 1.500H26.500L20.500 7.500z" /></Tool>
          <Tool label="Droite"><ViewCube face="M20.500 7.500 26.500 1.500V20.500L20.500 26.500z" /></Tool>
          <Sep />
          <Tool label="Arrière"><ViewCube back face="M7.500 1.500H26.500V20.500H7.500z" /></Tool>
          <Tool label="Dessous"><ViewCube back face="M1.500 26.500 7.500 20.500H26.500L20.500 26.500z" /></Tool>
          <Tool label="Gauche"><ViewCube back face="M1.500 7.500 7.500 1.500V20.500L1.500 26.500z" /></Tool>
          <Sep />
          <Tool label="Mesurer la distance"><RulerIcon /></Tool>
          <Join />
          <Tool label="Créer une pièce"><PartIcon /></Tool>
          <Tool label="Créer un groupe"><GroupIcon /></Tool>
          <Tool label="Créer un lien"><LinkIcon /></Tool>
          <Tool label="Créer un groupe de liens"><LinkGroupIcon /></Tool>
          <Drop label="Options de lien" />
        </Bar>

        <Bar>
          <Tool label="Créer un corps"><BodyIcon /></Tool>
          <Tool label="Créer une esquisse"><SketchIcon /></Tool>
          <Tool label="Éditer l'esquisse"><ImportIcon /></Tool>
          <Tool label="Appliquer sur une face"><GrayCubeIcon /></Tool>
          <Sep />
          <Tool label="Point de référence"><PointIcon /></Tool>
          <Tool label="Ligne de référence"><LineIcon /></Tool>
          <Tool label="Plan de référence"><PlaneIcon /></Tool>
          <Tool label="Système de coordonnées"><LcsIcon /></Tool>
          <Tool label="Forme liée"><BinderIcon id="bind1" from="#8fb4dc" to="#204a87" /></Tool>
          <Tool label="Sous-forme liée"><BinderIcon id="bind2" from="#8ae234" to="#4e9a06" /></Tool>
          <Tool label="Clone"><CloneIcon /></Tool>
          <Join />
          <Tool label="Protrusion"><PadIcon /></Tool>
          <Tool label="Révolution"><RevolutionIcon /></Tool>
          <Tool label="Lissage additif"><Loft fill="#f3dc1f" edge="#c4320a" face="#f5b21a" /></Tool>
          <Tool label="Balayage additif"><Pipe fill="#f3dc1f" edge="#b03a0a" face="#f5b21a" /></Tool>
          <Tool label="Hélice additive"><Helix fill="#d9c21a" rod="#cc2222" /></Tool>
          <Tool label="Primitive additive"><PrimAddIcon /></Tool>
          <Drop label="Primitives additives" />
          <Sep />
          <Tool label="Cavité"><PocketIcon /></Tool>
          <Tool label="Perçage"><HoleIcon /></Tool>
          <Tool label="Rainure"><GrooveIcon /></Tool>
          <Tool label="Lissage soustractif"><Loft fill="#d81c1c" edge="#4b5f96" face="#b01c2c" /></Tool>
          <Tool label="Balayage soustractif"><Pipe fill="#e02020" edge="#4b5f96" face="#5b3f80" /></Tool>
          <Tool label="Hélice soustractive"><Helix fill="#4f80bc" rod="#cc2222" /></Tool>
          <Tool label="Primitive soustractive"><PrimSubIcon /></Tool>
          <Drop label="Primitives soustractives" />
          <Sep />
          <Tool label="Symétrie"><MirroredIcon /></Tool>
          <Tool label="Répétition linéaire"><LinearIcon /></Tool>
          <Tool label="Répétition circulaire"><PolarIcon /></Tool>
          <Tool label="Transformation multiple"><MultiIcon /></Tool>
          <Sep />
          <Tool label="Congé"><FilletIcon /></Tool>
          <Tool label="Chanfrein"><FilletIcon flat /></Tool>
          <Tool label="Dépouille"><DraftIcon /></Tool>
          <Tool label="Coque"><ThicknessIcon /></Tool>
          <Sep />
          <Tool label="Opération booléenne"><BooleanIcon /></Tool>
          <Join />
          <Tool label="Mesure linéaire"><Tape /></Tool>
          <Tool label="Mesure angulaire">
            <Tape>
              <path d="M10 4Q21 0 24 13" stroke="#2a4a86" strokeWidth="2.600" />
              <path d="M2 3 7 25 27 14" stroke="#5c0808" strokeWidth="3.600" />
              <path d="M2 3 7 25 27 14" stroke="#cc1c1c" strokeWidth="2.200" />
            </Tape>
          </Tool>
          <Sep />
          <Tool label="Actualiser les mesures">
            <Tape>
              <path d="M15 6C16 1 23 0 25 4L28 1V8H21L23 6C21 4 18 5 18 7zM28 9C27 15 20 16 18 13L15 15V9H21L19 11C21 12 24 12 25 9z" fill="#8aa6d8" stroke="#24407c" strokeWidth=".9" />
            </Tape>
          </Tool>
          <Tool label="Effacer les mesures">
            <Tape><path d="M2 16 14 27M14 16 2 27" stroke="#a40c0c" strokeWidth="3.600" /></Tape>
          </Tool>
          <Tool label="Afficher toutes les mesures">
            <Tape>
              <path d="M2 27V3H26V27" stroke="#3c7a18" strokeWidth="3" />
              <path d="M2 15 14 2 26 14 16 26" stroke="#b01818" strokeWidth="2.800" />
            </Tape>
          </Tool>
          <Tool label="Afficher les mesures 3D">
            <Tape><path d="M2 14 12 2 26 14 16 26" stroke="#b01818" strokeWidth="2.800" /></Tape>
          </Tool>
          <Tool label="Afficher les mesures delta">
            <Tape><path d="M2 27V3H26V27" stroke="#4c8a1c" strokeWidth="3" /></Tape>
          </Tool>
        </Bar>
      </div>

      <main className="flex min-h-0 flex-1">
        <aside className="flex w-[435px] shrink-0 flex-col pb-[3px] pr-[7px]">
          <div className="mt-[2px] flex h-[23px] shrink-0 items-center border border-[#b9b9b9] bg-[#d9d9d9] pl-[5px]">
            <h2 className="flex-1">Vue combinée</h2>
            <button type="button" aria-label="Détacher" className="mr-[14px]">
              <svg viewBox="0 0 12 12" className="h-3 w-3" fill="none" stroke="#222" strokeWidth="1.500">
                <path d="M4 3V1H11V7H9" />
                <rect x="1" y="4.500" width="7" height="6" />
              </svg>
            </button>
            <button type="button" aria-label="Fermer le panneau" className="mr-[5px]"><X size={14} strokeWidth={3} color="#333" /></button>
          </div>

          <div role="tablist" className="flex h-7 shrink-0 items-end text-[12px]">
            <button type="button" role="tab" aria-selected="true" className="h-[25px] w-[72px] bg-[#fafafa] pr-[2px]">Modèle</button>
            <button type="button" role="tab" aria-selected="false" className="ml-[2px] h-[23px] w-[61px] bg-[#f4f4f4]">Tâches</button>
          </div>

          <section className="ml-[2px] mr-[3px] flex h-[373px] shrink-0 flex-col border-b border-r border-[#7a7a7a] bg-white">
            <div className="flex h-[34px] shrink-0 items-center">
              <span className="flex h-7 w-[205px] items-center border-r border-[#e0e0e0] pl-[6px]">Étiquettes &amp; attributs</span>
              <span className="flex h-7 w-[125px] items-center border-r border-[#e0e0e0] pl-[5px]">Description</span>
            </div>
            <p className="h-[21px] pl-[6px]">Application</p>
            <ul role="tree">
              {nodes.map((n) => (
                <li key={n.label} role="treeitem" className={`flex h-[25px] items-center ${n.indent}`}>
                  {n.leaf ? (
                    <span className="w-[18px]" />
                  ) : (
                    <button type="button" aria-label={`Déplier ${n.label}`} className="w-[18px] text-[#222]">
                      {n.open ? <ChevronDown size={16} strokeWidth={2} /> : <ChevronRight size={16} strokeWidth={1.500} />}
                    </button>
                  )}
                  <span className="ml-2">{n.icon}</span>
                  <span className={`pl-[7px] ${n.style ?? ''}`}>{n.label}</span>
                </li>
              ))}
            </ul>
          </section>

          <section className="ml-[5px] mr-2 mt-[9px] min-h-0 flex-1 border border-[#7a7a7a] bg-white">
            <table className="w-full table-fixed text-left">
              <thead>
                <tr className="h-8">
                  <th className="w-[125px] border-r border-[#e6e6e6] pl-[5px] font-normal">Propriété</th>
                  <th className="pl-[5px] font-normal">Valeur</th>
                </tr>
              </thead>
            </table>
          </section>

          <div role="tablist" className="mt-[2px] flex h-[27px] shrink-0 items-center bg-[#fafafa] pl-[5px] text-[12px]">
            <button type="button" role="tab" aria-selected="false" className="h-[22px] w-[46px] bg-[#f0f0f0]">Vue</button>
            <button type="button" role="tab" aria-selected="true" className="h-full w-[80px] border-r border-[#dcdcdc] bg-white">Données</button>
          </div>
        </aside>

        <section className="flex min-w-0 flex-1 flex-col">
          <div className="relative flex-1 overflow-hidden bg-linear-to-b from-[#343468] to-[#9696ac]">
            <Model />
            <NavCube />
            <AxisCross />
          </div>
          <div className="flex h-[29px] shrink-0">
            <div className="flex items-center bg-[#fcfcfc] pl-[14px] pr-4 text-[12px]">
              <FreeCadLogo className="h-5 w-5" />
              <span className="pl-[6px] pr-[6px]">viseurpol : 1</span>
              <button type="button" aria-label="Fermer le document" className="flex h-[18px] w-[18px] items-center justify-center rounded-[2px] border-2 border-[#c0442a] bg-[#ee8050]">
                <X size={11} strokeWidth={4} color="#fff" />
              </button>
            </div>
          </div>
        </section>
      </main>

      <footer className="flex h-[37px] shrink-0 items-center pt-[3px] text-[12px]">
        <p className="flex-1 pl-[3px]">Valid, nom interne : Pocket001</p>
        <div className="flex h-full items-center border-l border-[#d4d4d4] pl-[18px]">
          <button type="button" className="flex items-center">
            <Icon className="h-5 w-5">
              <path d="M6 8Q13 1 20 5M8 23Q16 26 23 17" stroke="#777" strokeWidth="3.600" />
              <circle cx="21" cy="7" r="4.600" fill="#222" />
              <circle cx="6" cy="22" r="4.600" fill="#222" />
            </Icon>
            <span className="pl-[3px]">Gesture</span>
            <svg viewBox="0 0 10 6" className="ml-[6px] h-[6px] w-[10px]" aria-hidden="true"><path d="M0 0H10L5 6z" fill="#000" /></svg>
          </button>
        </div>
        <p className="ml-[9px] flex h-7 items-center border-l border-[#dadada] pl-[5px] pr-[11px]">266,91 mm x 149,18 mm</p>
      </footer>
    </div>
  );
}
